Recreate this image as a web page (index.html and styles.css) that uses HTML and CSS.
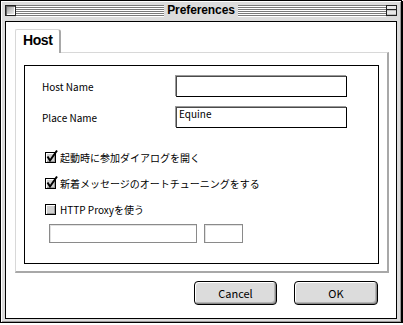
FILE: index.html
```html
<!DOCTYPE html>
<html lang="ja">
<head>
<meta charset="utf-8">
<title>Preferences</title>
<link rel="stylesheet" href="styles.css">
</head>
<body>
<div class="window">
  <div class="titlebar">
    <span class="close-box"></span>
    <span class="stripes"></span>
    <span class="title">Preferences</span>
    <span class="stripes"></span>
    <span class="shade-box"></span>
  </div>
  <div class="content">
    <div class="tabs"><div class="tab">Host</div></div>
    <div class="panel">
      <div class="group">
        <div class="field-row first">
          <label class="label">Host Name</label>
          <input class="text-field" type="text" value="">
        </div>
        <div class="field-row">
          <label class="label">Place Name</label>
          <input class="text-field" type="text" value="Equine">
        </div>
        <div class="check-row cr-first">
          <span class="checkbox checked"><svg class="check" width="14" height="14" viewBox="0 0 14 14"><path d="M2.5 6.5 L5 10.5 L12 0.5" fill="none" stroke="#000" stroke-width="2"/></svg></span>
          <span class="check-label">起動時に参加ダイアログを開く</span>
        </div>
        <div class="check-row">
          <span class="checkbox checked"><svg class="check" width="14" height="14" viewBox="0 0 14 14"><path d="M2.5 6.5 L5 10.5 L12 0.5" fill="none" stroke="#000" stroke-width="2"/></svg></span>
          <span class="check-label">新着メッセージのオートチューニングをする</span>
        </div>
        <div class="check-row">
          <span class="checkbox"></span>
          <span class="check-label">HTTP Proxyを使う</span>
        </div>
        <div class="proxy-row">
          <input class="proxy-field host" type="text" disabled>
          <input class="proxy-field port" type="text" disabled>
        </div>
      </div>
    </div>
    <div class="buttons">
      <button class="btn cancel" type="button">Cancel</button>
      <button class="btn ok" type="button">OK</button>
    </div>
  </div>
</div>
</body>
</html>
```

FILE: styles.css
```css
* { box-sizing: border-box; }

body {
  margin: 0;
  background: #fff;
  font-family: "Noto Sans CJK JP", "Liberation Sans", sans-serif;
  font-size: 10px;
  color: #000;
}

.window {
  width: 402px;
  height: 323px;
  border: 1px solid #000;
  box-shadow: 1px 1px 0 #000, inset 1px 1px 0 #fff, inset -1px -1px 0 #999;
  background: #dcdcdc;
  padding: 0 4px 3px 4px;
  display: flex;
  flex-direction: column;
}

.titlebar {
  height: 20px;
  display: flex;
  align-items: flex-start;
  padding-top: 4px;
}

.close-box {
  flex: 0 0 11px;
  height: 11px;
  border: 1px solid #222;
  background: linear-gradient(135deg, #8a8a8a 0%, #c8c8c8 50%, #f4f4f4 100%);
  box-shadow: inset 1px 1px 0 #666, inset -1px -1px 0 #fff;
}

.stripes {
  flex: 1 1 auto;
  height: 12px;
  background: repeating-linear-gradient(to bottom, #7a7a7a 0 1px, #ffffff 1px 2px);
}
.stripes:first-of-type { margin-left: 5px; }
.stripes:last-of-type { margin-right: 4px; }

.title {
  flex: 0 0 auto;
  padding: 0 3px;
  margin-top: -2px;
  font-family: "Liberation Sans", Arial, sans-serif;
  font-weight: bold;
  font-size: 12px;
  line-height: 15px;
  letter-spacing: -0.1px;
}

.shade-box {
  flex: 0 0 11px;
  height: 11px;
  border: 1px solid #222;
  background: linear-gradient(to bottom, #e8e8e8 0 3px, #222 3px 4px, #bdbdbd 4px 5px, #e8e8e8 5px 8px, #bdbdbd 8px 9px);
}

.content {
  height: 298px;
  border: 1px solid #000;
  background: #fff;
  display: flex;
  flex-direction: column;
}

.tabs {
  margin-top: 7px;
  padding-left: 9px;
  display: flex;
  position: relative;
  z-index: 1;
}

.tab {
  width: 46px;
  height: 24px;
  margin-bottom: -1px;
  background: #fff;
  border-top: 1px solid #d8d8d8;
  border-left: 1px solid #d8d8d8;
  border-right: 2px solid #a8a8a8;
  border-radius: 2px 3px 0 0;
  padding-left: 7px;
  font-family: "Liberation Sans", Arial, sans-serif;
  font-weight: bold;
  font-size: 14px;
  line-height: 21px;
  letter-spacing: -0.4px;
}

.panel {
  margin-left: 9px;
  width: 374px;
  height: 221px;
  border-top: 1px solid #d8d8d8;
  border-left: 1px solid #d8d8d8;
  border-right: 2px solid #a8a8a8;
  border-bottom: 2px solid #a8a8a8;
  padding: 12px 8px 7px 8px;
}

.group {
  width: 355px;
  height: 199px;
  border: 1px solid #000;
  display: flex;
  flex-direction: column;
}

.field-row {
  display: flex;
  align-items: center;
  height: 21px;
  margin-top: 10px;
  padding-left: 17px;
}

.label {
  flex: 0 0 134px;
  font-size: 10px;
  line-height: 12px;
}

.text-field {
  width: 171px;
  height: 21px;
  margin: 0;
  border: 1px solid #000;
  border-top-color: #4a4a4a;
  border-left-color: #4a4a4a;
  box-shadow: -1px -1px 0 #9a9a9a;
  background: #fff;
  padding: 0 2px 9px 2px;
  font-family: "Noto Sans CJK JP", "Liberation Sans", sans-serif;
  font-size: 10px;
  line-height: 10px;
  color: #000;
  outline: none;
}

.check-row {
  display: flex;
  align-items: center;
  height: 11px;
  margin-top: 15px;
  padding-left: 20px;
  gap: 4px;
}
.check-row.cr-first { margin-top: 24px; }

.checkbox {
  position: relative;
  flex: 0 0 11px;
  height: 11px;
  border: 1px solid #000;
  background: #d0d0d0;
  box-shadow: inset 1px 1px 0 #fff, inset -1px -1px 0 #9a9a9a;
}

.check {
  position: absolute;
  left: -1px;
  top: -3px;
  overflow: visible;
}

.check-label {
  font-size: 10px;
  line-height: 11px;
  white-space: nowrap;
}

.proxy-row {
  display: flex;
  gap: 7px;
  margin-top: 9px;
  padding-left: 24px;
}

.proxy-field {
  height: 19px;
  margin: 0;
  padding: 0;
  border: 1px solid #8a8a8a;
  background: #fff;
  box-shadow: inset 1px 1px 0 #e2e2e2;
}
.proxy-field.host { width: 148px; }
.proxy-field.port { width: 39px; }

.buttons {
  display: flex;
  justify-content: flex-end;
  gap: 17px;
  margin-top: 8px;
  padding-right: 18px;
}

.btn {
  height: 24px;
  margin: 0;
  padding: 0;
  border: 1px solid #000;
  border-radius: 4px;
  background: #dcdcdc;
  box-shadow: inset 1px 1px 0 #fff, inset -1px -1px 0 #8a8a8a, inset -2px -2px 0 #b4b4b4;
  font-family: "Noto Sans CJK JP", "Liberation Sans", sans-serif;
  font-size: 11px;
  line-height: 22px;
  color: #000;
}
.btn.cancel { width: 83px; }
.btn.ok { width: 84px; }
```
